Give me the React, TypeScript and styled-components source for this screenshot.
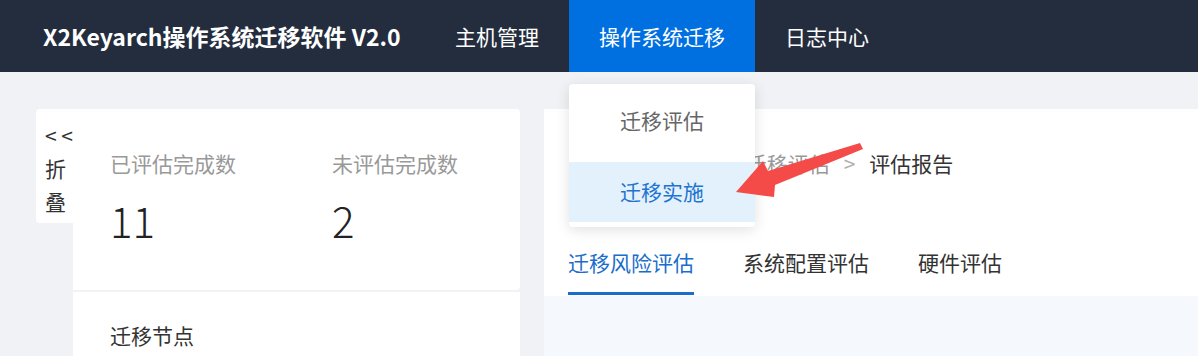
import styled, { createGlobalStyle } from 'styled-components'

const GlobalStyle = createGlobalStyle`
  html, body {
    margin: 0;
    padding: 0;
    background: #f0f2f5;
    overflow: hidden;
  }
  body {
    font-family: "Noto Sans CJK SC", "Noto Sans", sans-serif;
  }
`

const Page = styled.div`
  position: relative;
  width: 1198px;
  height: 356px;
  overflow: hidden;
  background: #f0f2f5;
`

const Header = styled.header`
  height: 72px;
  display: flex;
  align-items: stretch;
  padding-left: 43px;
  background: #232d3e;
`

const Title = styled.div`
  width: 382px;
  display: flex;
  align-items: center;
  font-size: 23px;
  font-weight: 700;
  color: #fff;
  white-space: nowrap;
`

const NavItem = styled.div<{ $active?: boolean }>`
  position: relative;
  display: flex;
  align-items: center;
  padding: 0 30px;
  font-size: 21px;
  color: #fff;
  white-space: nowrap;
  background: ${(p) => (p.$active ? '#0070e0' : 'transparent')};
`

const Dropdown = styled.div`
  position: absolute;
  top: 84px;
  left: 0;
  right: 0;
  padding-bottom: 5px;
  background: #fff;
  border-radius: 4px;
  box-shadow: 0 3px 14px rgba(0, 0, 0, 0.12);
  z-index: 10;
`

const DropItem = styled.div<{ $height: number; $lift?: number; $active?: boolean }>`
  height: ${(p) => p.$height}px;
  box-sizing: border-box;
  padding-bottom: ${(p) => p.$lift ?? 0}px;
  display: flex;
  align-items: center;
  justify-content: center;
  font-size: 21px;
  color: ${(p) => (p.$active ? '#1f74cf' : '#666')};
  background: ${(p) => (p.$active ? '#e3f1fd' : 'transparent')};
`

const Main = styled.div`
  display: flex;
  height: 284px;
  padding: 37px 0 0 36px;
  box-sizing: border-box;
`

const CollapseTab = styled.div`
  width: 37px;
  height: 114px;
  box-sizing: border-box;
  padding: 10px 0 0 9px;
  background: #fff;
  border-radius: 4px 0 0 4px;
  font-size: 21px;
  line-height: 33px;
  color: #333;
  white-space: pre;
`

const LeftCol = styled.div`
  width: 447px;
  display: flex;
  flex-direction: column;
  gap: 2px;
`

const StatCard = styled.div`
  height: 181px;
  box-sizing: border-box;
  display: flex;
  padding: 43px 0 0 37px;
  background: #fff;
  border-radius: 0 4px 4px 0;
`

const Stat = styled.div`
  flex: none;
  width: 222px;
`

const StatLabel = styled.div`
  font-size: 21px;
  line-height: 22px;
  color: #999;
`

const StatValue = styled.div`
  margin-top: 25px;
  font-size: 42px;
  font-weight: 300;
  line-height: 42px;
  color: #222;
`

const NodeCard = styled.div`
  flex: 1;
  padding: 32px 37px 0;
  background: #fff;
  font-size: 21px;
  line-height: 22px;
  color: #333;
`

const RightPanel = styled.div`
  flex: 1;
  margin-left: 24px;
  display: flex;
  flex-direction: column;
  background: #fff;
`

const Breadcrumb = styled.div`
  height: 108px;
  display: flex;
  align-items: center;
  padding-left: 36px;
  font-size: 21px;
  white-space: nowrap;
`

const Crumb = styled.span<{ $current?: boolean }>`
  color: ${(p) => (p.$current ? '#333' : '#999')};
`

const Sep = styled.span`
  margin: 0 14px;
  color: #b0b0b0;
`

const Tabs = styled.div`
  display: flex;
  gap: 49px;
  padding: 0 0 1px 24px;
`

const Tab = styled.div<{ $active?: boolean }>`
  padding: 34px 0 19px;
  font-size: 21px;
  line-height: 22px;
  color: ${(p) => (p.$active ? '#1a6dcb' : '#333')};
  border-bottom: 3px solid ${(p) => (p.$active ? '#1a6dcb' : 'transparent')};
`

const Content = styled.div`
  flex: 1;
  background: #f5f8fd;
`

const Arrow = styled.svg`
  position: absolute;
  left: 730px;
  top: 138px;
  z-index: 20;
`

export default function App() {
  return (
    <Page>
      <GlobalStyle />
      <Header>
        <Title>X2Keyarch操作系统迁移软件 V2.0</Title>
        <NavItem>主机管理</NavItem>
        <NavItem $active>
          操作系统迁移
          <Dropdown>
            <DropItem $height={78} $lift={6}>迁移评估</DropItem>
            <DropItem $height={60} $lift={2} $active>迁移实施</DropItem>
          </Dropdown>
        </NavItem>
        <NavItem>日志中心</NavItem>
      </Header>
      <Main>
        <CollapseTab>{'< <\n折\n叠'}</CollapseTab>
        <LeftCol>
          <StatCard>
            <Stat>
              <StatLabel>已评估完成数</StatLabel>
              <StatValue>11</StatValue>
            </Stat>
            <Stat>
              <StatLabel>未评估完成数</StatLabel>
              <StatValue>2</StatValue>
            </Stat>
          </StatCard>
          <NodeCard>迁移节点</NodeCard>
        </LeftCol>
        <RightPanel>
          <Breadcrumb>
            <Crumb>操作系统迁移</Crumb>
            <Sep>&gt;</Sep>
            <Crumb>迁移评估</Crumb>
            <Sep>&gt;</Sep>
            <Crumb $current>评估报告</Crumb>
          </Breadcrumb>
          <Tabs>
            <Tab $active>迁移风险评估</Tab>
            <Tab>系统配置评估</Tab>
            <Tab>硬件评估</Tab>
          </Tabs>
          <Content />
        </RightPanel>
      </Main>
      <Arrow width="140" height="66" viewBox="0 0 140 66">
        <polygon
          points="6,54 33,23 38,33 130,5 133,11 45,47 44,59"
          fill="#f54b48"
          strokeLinejoin="round"
        />
      </Arrow>
    </Page>
  )
}
